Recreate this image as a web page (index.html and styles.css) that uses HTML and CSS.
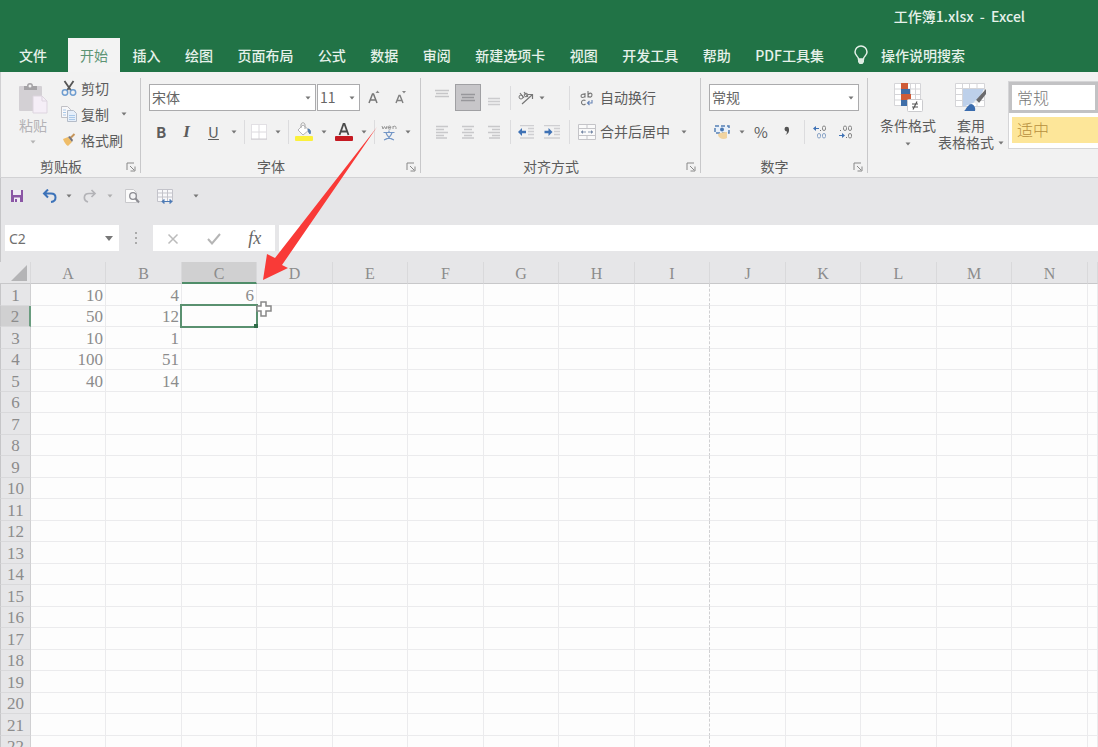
FILE: index.html
```html
<!DOCTYPE html>
<html lang="zh-CN">
<head>
<meta charset="utf-8">
<title>工作簿1.xlsx - Excel</title>
<link rel="stylesheet" href="styles.css">
</head>
<body>
<svg class="defs" width="0" height="0" aria-hidden="true">
  <symbol id="caret" viewBox="0 0 6 4"><path d="M0.5 0.5h5L3 3.5z" fill="#777"/></symbol>
  <symbol id="launch" viewBox="0 0 10 10"><path d="M1 8V1h7M4 4l4 4M9 4.500V9H4.500" fill="none" stroke="#888"/></symbol>
</svg>
<div class="app">
  <header class="titlebar">
    <h1 class="title">工作簿1.xlsx&nbsp; -&nbsp; Excel</h1>
    <nav class="tabs">
      <button class="tab file">文件</button>
      <div class="tablist">
        <button class="tab active">开始</button>
        <button class="tab">插入</button>
        <button class="tab">绘图</button>
        <button class="tab">页面布局</button>
        <button class="tab">公式</button>
        <button class="tab">数据</button>
        <button class="tab">审阅</button>
        <button class="tab">新建选项卡</button>
        <button class="tab">视图</button>
        <button class="tab">开发工具</button>
        <button class="tab">帮助</button>
        <button class="tab">PDF工具集</button>
      </div>
      <button class="tell">
        <svg width="16" height="20" viewBox="0 0 16 20"><path d="M5.500 14C5.500 11.500 2 10.500 2 7a6 6 0 0 1 12 0c0 3.500-3.500 4.500-3.500 7z" fill="none" stroke="#e4f0e8" stroke-width="1.500"/><path d="M5 14h6v3l-1.500 2h-3L5 17z" fill="#dcebe1"/></svg>
        <span>操作说明搜索</span>
      </button>
    </nav>
  </header>

  <section class="ribbon">
    <div class="group clipboard">
      <div class="group-body clip-body">
        <button class="paste">
          <svg width="30" height="32" viewBox="0 0 30 32"><rect x="1" y="4" width="23" height="25" rx="1" fill="#d3d0d4"/><path d="M6 4h3a3 3 0 0 1 6 0h4v4H6z" fill="#a5a3a6"/><circle cx="12" cy="4" r="1.500" fill="#f1f1f1"/><path d="M15 14h9l5 5v12H15z" fill="#f5eef7" stroke="#ddd5df"/><path d="M24 14v5h5" fill="none" stroke="#ddd5df"/></svg>
          <span>粘贴</span>
          <svg class="caret faded" width="6" height="4"><use href="#caret"/></svg>
        </button>
        <div class="clip-list">
          <button class="clip-item">
            <svg width="16" height="16" viewBox="0 0 16 16"><path d="M3.500 1l6.500 9.500M12.500 1L6 10.500" stroke="#555" stroke-width="1.800" fill="none"/><circle cx="4" cy="12.500" r="2.700" fill="none" stroke="#6f9dd0" stroke-width="1.500"/><circle cx="12" cy="12.500" r="2.700" fill="none" stroke="#6f9dd0" stroke-width="1.500"/></svg>
            <span>剪切</span>
          </button>
          <button class="clip-item">
            <svg width="16" height="16" viewBox="0 0 16 16"><path d="M.5.500h6l3 3v8h-9z" fill="#f8f8fa" stroke="#c0c0c5"/><path d="M6.500 4.500h6l3 3v8h-9z" fill="#e6effa" stroke="#b5bcc8"/><path d="M2 4h3M2 6.500h3M2 9h3M8 9.500h6M8 11.500h6M8 13.500h6" stroke="#a9c8e8"/></svg>
            <span>复制</span>
            <svg class="caret" width="6" height="4"><use href="#caret"/></svg>
          </button>
          <button class="clip-item">
            <svg width="16" height="16" viewBox="0 0 16 16"><path d="M2 7l5-2 4 5-4 4c-2-1-4-4-5-7z" fill="#efbd69"/><path d="M7 5l2-1 3 4-1 2z" fill="#77747a"/><path d="M10 5.500L13.500 2" stroke="#c6955a" stroke-width="2"/></svg>
            <span>格式刷</span>
          </button>
        </div>
      </div>
      <div class="group-foot"><span>剪贴板</span><button class="launch" aria-label="剪贴板设置"><svg width="10" height="10"><use href="#launch"/></svg></button></div>
    </div>

    <div class="group font">
      <div class="group-body">
        <div class="row font-top">
          <span class="combo"><select aria-label="字体"><option>宋体</option></select><svg class="caret" width="6" height="4"><use href="#caret"/></svg></span>
          <span class="combo"><select aria-label="字号"><option>11</option></select><svg class="caret" width="6" height="4"><use href="#caret"/></svg></span>
          <button class="tool" aria-label="增大字号"><svg width="14" height="16" viewBox="0 0 14 16"><path d="M2 13L5.500 4h1L10 13M3.500 10h5" fill="none" stroke="#777" stroke-width="1.500"/><path d="M8.500 3L10.500.500l2 2.500z" fill="#888"/></svg></button>
          <button class="tool" aria-label="减小字号"><svg width="14" height="16" viewBox="0 0 14 16"><path d="M2 13l3-7.500h1L9 13M3 10.500h5" fill="none" stroke="#808080" stroke-width="1.400"/><path d="M8 1l2 2.500L12 1z" fill="#888"/></svg></button>
        </div>
        <div class="row font-bottom">
          <button class="tool bold">B</button>
          <button class="tool italic">I</button>
          <button class="tool underline">U</button>
          <svg class="caret" width="6" height="4"><use href="#caret"/></svg>
          <i class="sep"></i>
          <button class="tool" aria-label="边框"><svg width="16" height="16" viewBox="0 0 16 16"><rect x=".5" y=".5" width="15" height="15" fill="#fff" stroke="#e2e0e4"/><path d="M8 1v14M1 8h14" stroke="#dcdade"/><path d="M0 15h16" stroke="#cfcdd1"/></svg></button>
          <svg class="caret" width="6" height="4"><use href="#caret"/></svg>
          <i class="sep"></i>
          <button class="tool" aria-label="填充颜色"><svg width="20" height="20" viewBox="0 0 20 20"><path d="M4 8l5-5 6 5-6 5z" fill="#fff" stroke="#b5b5b8"/><path d="M7 6V3c0-3 4-3 4 0v4" fill="none" stroke="#aaa"/><path d="M14 7c2 0 3 2 2 5-1-1-2-3-2-5z" fill="#567fae" stroke="#567fae"/><rect x="1" y="14" width="18" height="5" rx="1" fill="#fbf03c"/></svg></button>
          <svg class="caret" width="6" height="4"><use href="#caret"/></svg>
          <button class="tool" aria-label="字体颜色"><svg width="20" height="22" viewBox="0 0 20 22"><path d="M5.500 14L9.500 3h1l4 11M7 10.500h6" fill="none" stroke="#4b4b4b" stroke-width="1.800"/><rect x="1" y="15" width="18" height="5" rx="1" fill="#c51a22"/></svg></button>
          <svg class="caret" width="6" height="4"><use href="#caret"/></svg>
          <i class="sep"></i>
          <button class="tool" aria-label="拼音"><svg width="16" height="18" viewBox="0 0 16 18"><path d="M1 3l1 3 1.500-2.500L5 6l1-3M7 4.500h3C10 2.500 7 2.500 7 4.500s2 2 3 1M12 6V3M12 4c1-1.500 3-1 3 .500V6" fill="none" stroke="#999"/><path d="M2.500 9.500h11M8 7.500v2M5 9.500c1 4 3.500 6 8 7.500M11 9.500c-1 4-3.500 6-8 7.500" fill="none" stroke="#7396c6" stroke-width="1.200"/></svg></button>
          <svg class="caret" width="6" height="4"><use href="#caret"/></svg>
        </div>
      </div>
      <div class="group-foot"><span>字体</span><button class="launch" aria-label="字体设置"><svg width="10" height="10"><use href="#launch"/></svg></button></div>
    </div>

    <div class="group align">
      <div class="group-body">
        <div class="row align-row">
          <button class="tool" aria-label="顶端对齐"><svg width="14" height="18" viewBox="0 0 14 18"><path d="M0 1.500h14M1 4.500h12M0 7.500h14" stroke="#c6c6c8" stroke-width="1.500"/></svg></button>
          <button class="tool pressed" aria-label="垂直居中"><svg width="14" height="18" viewBox="0 0 14 18"><path d="M0 5.500h14M1 8.500h12M0 11.500h14" stroke="#97979b" stroke-width="1.500"/></svg></button>
          <button class="tool" aria-label="底端对齐"><svg width="14" height="18" viewBox="0 0 14 18"><path d="M1 9.500h12M1 12.500h12M1 15.500h12" stroke="#ccccce" stroke-width="1.500"/></svg></button>
          <i class="sep"></i>
          <button class="tool" aria-label="方向"><svg width="18" height="16" viewBox="0 0 18 16"><path d="M5 14L15 5M11 4.500h4.500V9" fill="none" stroke="#777" stroke-width="1.200"/><circle cx="4" cy="7" r="2" fill="none" stroke="#777"/><path d="M3 3l4 5M7 2l4 5" stroke="#777" stroke-width="1.200"/><circle cx="9" cy="5" r="1.800" fill="none" stroke="#777"/></svg></button>
          <svg class="caret lead" width="6" height="4"><use href="#caret"/></svg>
          <i class="sep"></i>
          <button class="wide"><svg width="18" height="18" viewBox="0 0 18 18"><path d="M7 4v4.500M7 6c-1-1.500-4-1-4 1s3 2 4 0M10 2v6.500M10 6.500c1 2.500 4 2 4-.5s-3-2.500-4 0M7.500 11.500c-2-1-4 0-4 2s2 3 4 1.500" fill="none" stroke="#777" stroke-width="1.100"/><path d="M14 11v3h-4M11.500 12L9.500 14l2 2" fill="none" stroke="#6683b5" stroke-width="1.100"/></svg><span>自动换行</span></button>
        </div>
        <div class="row align-row">
          <button class="tool" aria-label="左对齐"><svg width="12" height="14" viewBox="0 0 12 14"><path d="M0 1.500h12M0 4.500h8M0 7.500h12M0 10.500h8M0 13h11" stroke="#c8c8ca" stroke-width="1.500"/></svg></button>
          <button class="tool" aria-label="居中"><svg width="12" height="14" viewBox="0 0 12 14"><path d="M0 1.500h12M2 4.500h8M0 7.500h12M2 10.500h8M0 13h12" stroke="#c8c8ca" stroke-width="1.500"/></svg></button>
          <button class="tool" aria-label="右对齐"><svg width="12" height="14" viewBox="0 0 12 14"><path d="M0 1.500h12M4 4.500h8M0 7.500h12M4 10.500h8M1 13h11" stroke="#c8c8ca" stroke-width="1.500"/></svg></button>
          <i class="sep"></i>
          <button class="tool" aria-label="减少缩进"><svg width="16" height="14" viewBox="0 0 16 14"><path d="M2 .500h14M10 3.500h6M10 6.500h6M10 9.500h6M2 13h14" stroke="#cfcfd2" stroke-width="1.500"/><path d="M0 7l4-4v2.800h4v2.400H4V11z" fill="#3f72b5"/></svg></button>
          <button class="tool" aria-label="增加缩进"><svg width="16" height="14" viewBox="0 0 16 14"><path d="M0 .500h16M10 3.500h6M10 6.500h6M10 9.500h6M0 13h16" stroke="#cfcfd2" stroke-width="1.500"/><path d="M8.500 7l-4-4v2.800h-4v2.400h4V11z" fill="#3f72b5"/></svg></button>
          <i class="sep"></i>
          <button class="wide"><svg width="18" height="18" viewBox="0 0 18 18"><path d="M.5 1.500h17v15H.5zM.5 5.500h17M.5 12.500h17M9 1.500v4M9 12.500v4" fill="#fafafa" stroke="#c4c4c8"/><path d="M3 9h12" stroke="#8b9bb2" stroke-dasharray="5 2"/><path d="M5 7L3 9l2 2zM13 7l2 2-2 2z" fill="#7688a6"/></svg><span>合并后居中</span><svg class="caret" width="6" height="4"><use href="#caret"/></svg></button>
        </div>
      </div>
      <div class="group-foot"><span>对齐方式</span><button class="launch" aria-label="对齐设置"><svg width="10" height="10"><use href="#launch"/></svg></button></div>
    </div>

    <div class="group number">
      <div class="group-body">
        <div class="row number-top">
          <span class="combo"><select aria-label="数字格式"><option>常规</option></select><svg class="caret" width="6" height="4"><use href="#caret"/></svg></span>
        </div>
        <div class="row number-row">
          <button class="tool" aria-label="会计数字格式"><svg width="16" height="16" viewBox="0 0 16 16"><rect x="1" y="2" width="14" height="7" fill="#e8f0fa" stroke="#5580b5" stroke-dasharray="4 2" stroke-width="1.500"/><circle cx="8" cy="5.500" r="2" fill="#4a78b2"/><path d="M4 11c0-2 5-3 9-3v6c-3 2-8 1-9-3z" fill="#f0d3a0"/></svg></button>
          <svg class="caret" width="6" height="4"><use href="#caret"/></svg>
          <button class="tool pct">%</button>
          <button class="tool" aria-label="千位分隔"><svg width="8" height="12" viewBox="0 0 8 12"><path d="M1.500 3a2 2 0 1 1 4.500 0c.5 3-1 5-3.500 6 1-1 1.500-2 1.500-3.500C2.500 5.500 1.500 4 1.500 3z" fill="#555"/></svg></button>
          <i class="sep"></i>
          <button class="tool" aria-label="增加小数位数"><svg width="14" height="14" viewBox="0 0 14 14"><path d="M0 3.500L3 1v5zM3 3h3v1H3z" fill="#3f72b5"/><path d="M7 5.500h1" stroke="#777"/><rect x="9.500" y="1" width="3" height="4.500" rx="1.500" fill="none" stroke="#888"/><rect x="4.500" y="8.500" width="3" height="4.500" rx="1.500" fill="none" stroke="#8ba5c8"/><rect x="9.500" y="8.500" width="3" height="4.500" rx="1.500" fill="none" stroke="#8ba5c8"/></svg></button>
          <button class="tool" aria-label="减少小数位数"><svg width="14" height="14" viewBox="0 0 14 14"><path d="M6 10.500L3 8v5zM0 10h3v1H0z" fill="#3f72b5"/><path d="M1 5.500h1M7 12.500h1" stroke="#777"/><rect x="4.500" y="1" width="3" height="4.500" rx="1.500" fill="none" stroke="#888"/><rect x="9.500" y="1" width="3" height="4.500" rx="1.500" fill="none" stroke="#888"/><rect x="9.500" y="8.500" width="3" height="4.500" rx="1.500" fill="none" stroke="#888"/></svg></button>
        </div>
      </div>
      <div class="group-foot"><span>数字</span><button class="launch" aria-label="数字设置"><svg width="10" height="10"><use href="#launch"/></svg></button></div>
    </div>

    <div class="group styles">
      <button class="big">
        <svg width="32" height="32" viewBox="0 0 32 32"><path d="M2.500 2.500h26v22h-26zM2.500 8h26M2.500 13.500h26M2.500 19h26M9.500 2.500v22M18.500 2.500v22M23.500 2.500v22" fill="#fff" stroke="#d5d5d8"/><path d="M9 2h7v6H9zM9 13h10v6H9z" fill="#cf5c38"/><path d="M9 8h9v5H9zM9 19h6v6H9z" fill="#3f6ea8"/><rect x="15.500" y="18.500" width="15" height="12" rx="1" fill="#fff" stroke="#cbcbce"/><path d="M20 23h6M20 26h6M25 20.500l-4 8" stroke="#555" stroke-width="1.200"/></svg>
        <span>条件格式</span>
        <svg class="caret" width="6" height="4"><use href="#caret"/></svg>
      </button>
      <button class="big">
        <svg width="34" height="32" viewBox="0 0 34 32"><path d="M1.500 2.500h29v23h-29zM1.500 7.500h29M1.500 13.500h29M1.500 19.500h29M8.500 2.500v23M15.500 2.500v23M23 2.500v23" fill="#fff" stroke="#d5d5d8"/><path d="M9 8h21l-6 12-15 6z" fill="#bdd0ea"/><path d="M32 8L22 19l3 3 7-9z" fill="#6b6b6d"/><path d="M22 19l-2 2 2 2 3-1z" fill="#eee"/><path d="M10 30c2-1 3-6 7-7 3 0 5 4 4 7z" fill="#3a6cae"/></svg>
        <span>套用</span>
        <span class="with-caret">表格格式<svg class="caret" width="6" height="4"><use href="#caret"/></svg></span>
      </button>
      <div class="gallery">
        <button class="style normal">常规</button>
        <button class="style neutral">适中</button>
      </div>
    </div>
  </section>

  <div class="quick">
    <button class="tool" aria-label="保存"><svg width="14" height="14" viewBox="0 0 14 14"><path d="M1 1h12v12H1z" fill="#8b56a5"/><path d="M3 1h8v5H3z" fill="#f0eaf4"/><path d="M4 8.500h6V13H4z" fill="#f0eaf4"/><path d="M5 10h2v3H5z" fill="#8b56a5"/></svg></button>
    <button class="tool" aria-label="撤消"><svg width="16" height="14" viewBox="0 0 16 14"><path d="M2 4.500h7c6 0 6 8 0 8.500M6 .500L2 4.500l4 4" fill="none" stroke="#3d73b9" stroke-width="2"/></svg></button>
    <svg class="caret" width="6" height="4"><use href="#caret"/></svg>
    <button class="tool" aria-label="恢复"><svg width="16" height="14" viewBox="0 0 16 14"><path d="M13 4.500H7c-6 0-6 7-1 8.500M9.500 1L13 4.500 9.500 8" fill="none" stroke="#b3b3b7" stroke-width="1.700"/></svg></button>
    <svg class="caret faded" width="6" height="4"><use href="#caret"/></svg>
    <button class="tool" aria-label="打印预览"><svg width="16" height="16" viewBox="0 0 16 16"><path d="M1.500 1.500h8l3 3v10h-11z" fill="#fbfbfb" stroke="#c9c9cc"/><circle cx="9" cy="8" r="3.300" fill="#f4f4f6" stroke="#8c8c92" stroke-width="1.300"/><path d="M11.500 10.500l3.500 4" stroke="#8c8c92" stroke-width="2"/></svg></button>
    <button class="tool" aria-label="列宽"><svg width="18" height="16" viewBox="0 0 18 16"><path d="M1.500 1.500h15v12h-15zM1.500 5h15M1.500 9h15M6.500 1.500v12M11.500 1.500v12" fill="#f8f8fa" stroke="#c3c3ca"/><path d="M6 13.500h10M8 11.500L6 13.500l2 2zM14 11.500l2 2-2 2z" fill="#4c7ab5" stroke="#4c7ab5"/></svg></button>
    <button class="tool" aria-label="自定义快速访问工具栏"><svg class="caret" width="6" height="4"><use href="#caret"/></svg></button>
  </div>

  <div class="formula">
    <span class="name-box"><input aria-label="名称框" value="C2"><svg width="8" height="5" viewBox="0 0 8 5"><path d="M0 0h8L4 5z" fill="#777"/></svg></span>
    <svg class="grip" width="4" height="14" viewBox="0 0 4 14"><path d="M1 1h2v2H1zM1 6h2v2H1zM1 11h2v2H1z" fill="#aaa"/></svg>
    <div class="fx">
      <button class="tool" aria-label="取消"><svg width="12" height="12" viewBox="0 0 12 12"><path d="M1.500 1.500l9 9M10.500 1.500l-9 9" stroke="#bbb" stroke-width="1.500"/></svg></button>
      <button class="tool" aria-label="输入"><svg width="14" height="12" viewBox="0 0 14 12"><path d="M1 6l4 4.500L13 1" fill="none" stroke="#b5b5b5" stroke-width="2"/></svg></button>
      <button class="tool fx-label">fx</button>
    </div>
    <input class="formula-input" aria-label="编辑栏">
  </div>

  <main class="sheet"><table class="grid" id="grid"></table></main>
</div>
<svg class="pointer" width="116" height="156" viewBox="0 0 116 156" aria-hidden="true"><path d="M1 154L5 128l8 4L115 1 20 139l6 3z" fill="#f93a37"/></svg>
<script src="grid.js"></script>
</body>
</html>
```
FILE: styles.css
```css
* { box-sizing: border-box; }
body { margin: 0; font-family: "Noto Sans", "Noto Sans CJK SC", sans-serif; font-size: 14px; color: #5c5c5c; }
button { font: inherit; color: inherit; background: none; border: 0; padding: 0; margin: 0; white-space: nowrap; }
svg { display: block; flex: none; }
.defs { position: absolute; }
.app { height: 100vh; display: flex; flex-direction: column; overflow: hidden; background: #e6e6e8; }

.titlebar { background: #217346; color: #e6f1ea; font-family: "Noto Sans CJK SC", sans-serif; font-weight: 500; }
.title { margin: 0; height: 38px; padding-right: 73px; font-size: 14px; line-height: 33px; font-weight: 500; text-align: right; }
.tabs { display: flex; height: 34px; }
.tab { height: 34px; padding: 0 12px; line-height: 32px; }
.tab.file { width: 68px; flex: none; padding: 0 2px 0 0; }
.tablist { flex: 0 1 768px; display: flex; justify-content: space-between; }
.tab.active { background: #f3f3f3; color: #5d9474; font-weight: 400; }
.tell { display: flex; align-items: center; gap: 12px; padding-left: 17px; line-height: 32px; }

.ribbon { display: flex; height: 106px; background: #f2f2f2; border-bottom: 1px solid #d2d2d4; border-left: 1px solid #d0d0d2; font-family: "Noto Sans CJK SC", sans-serif; }
.group { display: flex; flex-direction: column; position: relative; flex: none; }
.group::after { content: ""; position: absolute; right: 0; top: 6px; bottom: 4px; width: 1px; background: #c8c8ca; }
.clipboard { width: 140px; }
.font, .align { width: 280px; }
.number { width: 167px; }
.styles { flex: 1 1 0; min-width: 0; flex-direction: row; overflow: hidden; padding-left: 10px; }
.styles::after { content: none; }
.group-body { flex: 1; padding: 12px 0 0 8px; }
.group-foot { display: grid; grid-template-columns: 1fr 20px; align-items: center; height: 22px; line-height: 20px; text-align: center; }
.launch { justify-self: center; padding-top: 2px; }
.caret { justify-self: center; }
.faded { opacity: .5; }

.clip-body { display: flex; padding: 3px 0 0 12px; }
.paste { display: flex; flex-direction: column; align-items: center; width: 40px; padding-top: 7px; color: #b4b2b6; }
.paste span { line-height: 22px; }
.paste .caret { margin-top: 4px; }
.clip-list { display: flex; flex-direction: column; padding-left: 8px; }
.clip-item { display: flex; align-items: center; gap: 4px; height: 26px; }
.clip-item .caret { margin-left: 8px; }

.row { display: grid; align-items: center; height: 27px; margin-bottom: 7px; }
.font-top { grid-template-columns: 167px 43px 26px 26px; column-gap: 1px; }
.font-bottom { grid-template-columns: 24px 27px 27px 14px 6px 24px 14px 6px 26px 14px 26px 14px 6px 24px 14px; }
.tool { display: flex; align-items: center; justify-content: center; height: 27px; }
.sep { width: 1px; height: 24px; background: #dcdcde; justify-self: center; }
.combo { display: grid; align-items: center; height: 27px; }
.combo select { grid-area: 1 / 1; width: 100%; height: 27px; appearance: none; border: 1px solid #ababad; border-radius: 0; background: #fff; padding: 0 2px 2px; font: inherit; color: #666; }
.combo .caret { grid-area: 1 / 1; justify-self: end; margin-right: 5px; }
.bold { font-weight: 700; font-size: 15px; line-height: 22px; }
.italic { font: italic 700 17px "Liberation Serif", serif; }
.underline { text-decoration: underline; font-size: 15px; }

.align-row { grid-template-columns: 26px 26px 26px 6px 26px 26px 8px auto; justify-content: start; }
.pressed { background: #c7c6c9; border: 1px solid #a0a0a3; }
.lead { justify-self: start; }
.wide { display: flex; align-items: center; gap: 4px; padding-left: 5px; }
.wide span { padding-bottom: 2px; }
.wide .caret { margin-left: 7px; }

.number-top { grid-template-columns: 150px; }
.number-row { grid-template-columns: 26px 14px 24px 28px 6px 26px 26px; }
.pct { font-size: 15px; }

.big { display: flex; flex-direction: column; align-items: center; width: 60px; padding-top: 9px; line-height: 17px; }
.big svg + span { margin-top: 4px; }
.big > .caret { margin-top: 8px; }
.big + .big { width: 66px; margin-left: 0; }
.with-caret { display: flex; align-items: center; gap: 4px; }
.gallery { flex: 1 1 0; display: flex; flex-direction: column; margin: 9px 0 28px 4px; background: #fff; border: 1px solid #d5d5d7; border-right: 0; overflow: hidden; }
.style { flex: none; text-align: left; font-size: 16px; font-weight: 300; line-height: 20px; color: #777; padding: 0 0 2px 5px; }
.normal { height: 31px; border: 3px solid #c2c2c4; }
.neutral { height: 26px; margin: 4px 0 0 3px; background: #fde699; color: #b78f3d; }

.quick { display: grid; grid-template-columns: 32px 34px 4px 38px 2px 42px 24px 38px; align-items: center; height: 47px; padding: 0 0 11px; border-left: 1px solid #c6c6c8; }
.formula { display: flex; align-items: center; height: 37px; padding-bottom: 11px; border-left: 1px solid #c6c6c8; padding-left: 4px; }
.name-box { display: grid; align-items: center; width: 114px; }
.name-box input { grid-area: 1 / 1; width: 100%; height: 26px; border: 0; background: #fff; padding: 0 4px; font: 14px "Noto Sans", sans-serif; color: #707070; }
.name-box svg { grid-area: 1 / 1; justify-self: end; margin-right: 6px; }
.grip { margin: 0 15px; }
.fx { display: grid; grid-template-columns: 1fr 1fr 1fr; width: 122px; height: 26px; background: #fff; margin-right: 4px; }
.fx-label { font: italic 18px "Liberation Serif", serif; color: #666; }
.formula-input { flex: 1; min-width: 0; height: 26px; border: 0; background: #fff; }

.sheet { flex: 1; min-height: 0; overflow: hidden; background: #fdfdfd; }
.grid { border-collapse: separate; border-spacing: 0; table-layout: fixed; width: 100%; font: 17px "Liberation Serif", serif; color: #8c8c8c; }
.grid th, .grid td { padding: 2px 0 0; height: 22px; line-height: 18px; border-right: 1px solid #ebebed; border-bottom: 1px solid #ebebed; font-weight: 400; }
.grid tbody tr:nth-child(even) > * { height: 21px; }
.grid td { text-align: right; padding-right: 2px; }
.grid thead th { background: #e6e6e8; border-right-color: #d9d9db; border-bottom-color: #c8c8ca; font-size: 16px; }
.grid tbody th { background: #e6e6e8; border-right-color: #d0d0d2; border-bottom-color: #d9d9db; border-left: 1px solid #c6c6c8; }
.grid thead th.on { background: #d0d0d1; border-bottom: 2px solid #4f8d69; line-height: 17px; }
.grid tbody th.on { background: #d0d0d1; border-right: 2px solid #6a9c7f; }
.grid .page-break { border-right: 1px dashed #d0d0d2; }
.corner svg { margin-left: auto; margin-right: 2px; }
.selected { position: relative; }
.selection { position: absolute; inset: -2px; border: 2px solid #5a9170; pointer-events: none; }
.selection::after { content: ""; position: absolute; right: -2px; bottom: -2px; width: 4px; height: 4px; background: #2f6d49; }
.cross { position: absolute; left: 73px; top: -6px; z-index: 2; }
.pointer { position: absolute; left: 262px; top: 126px; pointer-events: none; }
```
FILE: grid.js
```js
const columns = [..."ABCDEFGHIJKLMN", ""];
const values = [[10, 4, 6], [50, 12], [10, 1], [100, 51], [40, 14]];
const selected = { row: 1, col: 2 };

const widths = columns.map((c, i) => c ? `<col style="width:${i % 2 ? 76 : 75}px">` : "<col>").join("");
const heads = columns.map((c, i) => `<th scope="col"${i === selected.col ? ' class="on"' : ""}>${c}</th>`).join("");
const corner = '<th class="corner"><svg width="18" height="17" viewBox="0 0 18 17"><path d="M17 0v16H1z" fill="#b4b4b6"/></svg></th>';
const marker = '<span class="selection"></span><svg class="cross" width="18" height="18" viewBox="0 0 18 18"><path d="M6 2h5v4h5v5h-5v5H6v-5H2V6h4z" fill="#fff" stroke="#888" stroke-width="1.500"/></svg>';

let body = "";
for (let r = 0; r < 22; r++) {
  body += `<tr><th scope="row"${r === selected.row ? ' class="on"' : ""}>${r + 1}</th>`;
  columns.forEach((_, c) => {
    const isSelected = r === selected.row && c === selected.col;
    const name = isSelected ? "selected" : c === 8 ? "page-break" : "";
    body += `<td class="${name}">${isSelected ? marker : (values[r] || [])[c] ?? ""}</td>`;
  });
  body += "</tr>";
}

document.getElementById("grid").innerHTML =
  `<colgroup><col style="width:31px">${widths}</colgroup><thead><tr>${corner}${heads}</tr></thead><tbody>${body}</tbody>`;
```
